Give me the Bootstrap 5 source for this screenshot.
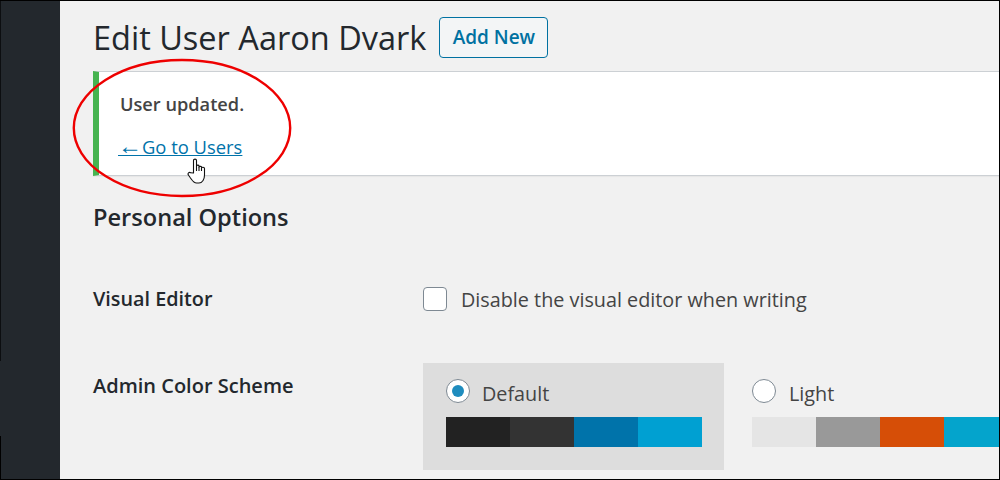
<!DOCTYPE html>
<html lang="en">
<head>
  <meta charset="UTF-8">
  <title>Edit User</title>
  <link href="https://cdn.jsdelivr.net/npm/bootstrap@5.3.3/dist/css/bootstrap.min.css" rel="stylesheet">
  <style>
    html, body {
      height: 100%;
      overflow: hidden;
    }
    body {
      background: #f1f1f1;
      color: #444;
      font-family: "Open Sans", "Noto Sans", sans-serif;
      font-size: 19.8px;
    }
    .wp-frame {
      width: 1000px;
      height: 480px;
      border-top: 1px solid #000;
      border-bottom: 1px solid #000;
      border-right: 1px solid #000;
      overflow: hidden;
      position: relative;
    }
    .wp-side {
      width: 60px;
      flex: none;
      background: linear-gradient(#0c0e10 0 360px, transparent 360px 435px, #000 435px) no-repeat left / 1px 100%, #23282d;
    }
    .wp-main {
      flex: 1;
      min-width: 0;
      padding-left: 33px;
    }
    .wp-head {
      height: 70px;
      padding-top: 16px;
    }
    .wp-title {
      font-size: 32.5px;
      line-height: 42px;
      font-weight: 400;
      color: #23282d;
      margin: 0 13px 0 0;
    }
    .wp-add {
      height: 41px;
      width: 109px;
      padding: 0;
      font-size: 19px;
      font-weight: 600;
      line-height: 39px;
      color: #0071a1;
      background: #f3f5f6;
      border: 1px solid #0071a1;
      border-radius: 4px;
    }
    .wp-notice {
      height: 105px;
      background: #fff;
      border: 1px solid #ccd0d4;
      border-left: 6px solid #46b450;
      border-right: 0;
      box-shadow: 0 1px 1px rgba(0, 0, 0, .04);
      padding: 19px 0 0 21px;
      font-size: 18.4px;
      line-height: 26px;
    }
    .wp-notice p {
      margin: 0 0 17px;
      font-size: 18.2px;
    }
    .wp-notice a {
      color: #0073aa;
    }
    .wp-arrow {
      font-family: "Liberation Sans", sans-serif;
      font-size: 24px;
      line-height: 0;
      margin-left: -2px;
    }
    .wp-section {
      font-size: 23.6px;
      font-weight: 600;
      color: #23282d;
      line-height: 30px;
      margin: 26px 0 0;
    }
    .wp-row {
      display: flex;
    }
    .wp-visual {
      height: 24px;
      margin-top: 55px;
      line-height: 24px;
    }
    .wp-visual .wp-label {
      padding-top: 0;
    }
    .wp-visual-text {
      margin-left: 14px;
      padding-top: 2px;
    }
    .wp-schemes {
      margin-top: 52px;
    }
    .wp-label {
      width: 330px;
      flex: none;
      font-weight: 600;
      color: #23282d;
      line-height: 26px;
    }
    .wp-schemes .wp-label {
      padding-top: 10px;
      font-size: 20px;
    }
    .wp-check, .wp-radio {
      width: 24px;
      height: 24px;
      flex: none;
      background: #fff;
      border: 1px solid #7e8993;
    }
    .wp-check {
      border-radius: 4px;
    }
    .wp-radio {
      border-radius: 50%;
      display: flex;
      align-items: center;
      justify-content: center;
    }
    .wp-dot {
      width: 12px;
      height: 12px;
      border-radius: 50%;
      background: #1e8cbe;
    }
    .wp-scheme {
      width: 301px;
      height: 107px;
      flex: none;
      padding: 16px 23px 0;
    }
    .wp-scheme.picked {
      background: #ddd;
    }
    .wp-plain {
      padding-left: 28px;
    }
    .wp-pick {
      height: 24px;
      line-height: 24px;
    }
    .wp-pick-text {
      padding-top: 6px;
      margin-left: 12px;
    }
    .wp-plain .wp-pick-text {
      margin-left: 13px;
    }
    .wp-swatches {
      display: flex;
      height: 30px;
      margin-top: 14px;
    }
    .wp-swatches span {
      width: 64px;
      flex: none;
    }
    .sw-ink { background: #222; }
    .sw-coal { background: #333; }
    .sw-blue { background: #0073aa; }
    .sw-sky { background: #00a0d2; }
    .sw-pale { background: #e5e5e5; }
    .sw-grey { background: #999; }
    .sw-rust { background: #d64e07; }
    .sw-teal { background: #04a4cc; }
    .wp-ring {
      position: absolute;
      left: 72px;
      top: 57px;
    }
    .wp-hand {
      position: absolute;
      left: 187px;
      top: 157px;
    }
  </style>
</head>
<body>
  <div class="wp-frame d-flex">
    <div class="wp-side"></div>
    <div class="wp-main">
      <div class="wp-head d-flex align-items-start">
        <h1 class="wp-title">Edit User Aaron Dvark</h1>
        <a class="wp-add btn" href="#">Add New</a>
      </div>
      <div class="wp-notice">
        <p class="fw-semibold">User updated.</p>
        <a href="#"><span class="wp-arrow">←</span>Go to Users</a>
      </div>
      <h2 class="wp-section">Personal Options</h2>
      <div class="wp-row wp-visual align-items-center">
        <div class="wp-label">Visual Editor</div>
        <span class="wp-check"></span>
        <span class="wp-visual-text">Disable the visual editor when writing</span>
      </div>
      <div class="wp-row wp-schemes">
        <div class="wp-label">Admin Color Scheme</div>
        <div class="wp-scheme picked">
          <div class="wp-pick d-flex align-items-center">
            <span class="wp-radio"><span class="wp-dot"></span></span>
            <span class="wp-pick-text">Default</span>
          </div>
          <div class="wp-swatches">
            <span class="sw-ink"></span><span class="sw-coal"></span><span class="sw-blue"></span><span class="sw-sky"></span>
          </div>
        </div>
        <div class="wp-scheme wp-plain">
          <div class="wp-pick d-flex align-items-center">
            <span class="wp-radio"></span>
            <span class="wp-pick-text">Light</span>
          </div>
          <div class="wp-swatches">
            <span class="sw-pale"></span><span class="sw-grey"></span><span class="sw-rust"></span><span class="sw-teal"></span>
          </div>
        </div>
      </div>
    </div>
    <svg class="wp-ring" width="222" height="144" viewBox="0 0 222 144" fill="none">
      <ellipse cx="110" cy="70" rx="108.2" ry="68" stroke="#ee0000" stroke-width="2.4"/>
    </svg>
    <svg class="wp-hand" width="20" height="27" viewBox="0 0 20 27" fill="#fff" stroke="#111" stroke-width="1.1" stroke-linejoin="round">
      <path d="M6.5 15V2.4C6.5.7 9.5.7 9.5 2.4V8C9.5 6.8 12 6.8 12 8V9C12 8 14.5 8 14.5 9V10C14.5 9 17.5 9 17.5 10.5V17C17.5 21 15.5 25 12 25H9.5C6.5 25 5 22 3.5 20L1.4 17C.3 15.4 2.2 13.6 3.6 14.8Z"/>
      <path d="M9.5 8V13M12 9V13M14.5 10V13" fill="none"/>
    </svg>
  </div>
  <script src="https://cdn.jsdelivr.net/npm/bootstrap@5.3.3/dist/js/bootstrap.bundle.min.js"></script>
</body>
</html>
